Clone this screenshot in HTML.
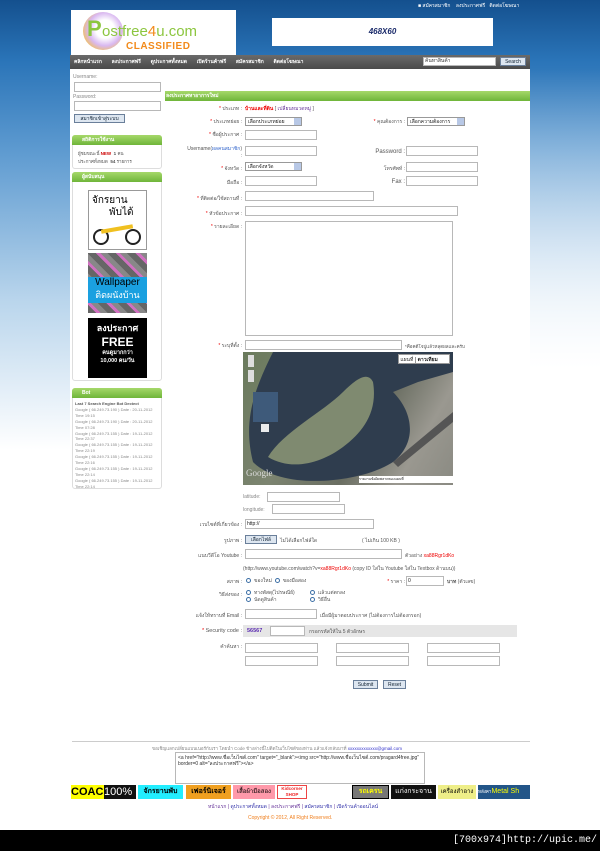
<!DOCTYPE html>
<html><head><meta charset="utf-8">
<style>
*{margin:0;padding:0;box-sizing:border-box}
body{width:600px;height:851px;position:relative;overflow:hidden;font-family:"Liberation Sans","Noto Sans CJK SC",sans-serif;font-size:5px;color:#555;
background:linear-gradient(180deg,#14508e 0px,#2a74b8 60px,#5d9ad0 150px,#b9d5ec 300px,#fff 450px);}
.a{position:absolute;white-space:nowrap}
.in{position:absolute;border:1px solid #b8b8b8;background:#fff}
.lb{position:absolute;text-align:right;white-space:nowrap;font-size:5px;color:#555}
.r{color:#e00}
.gh{position:absolute;background:linear-gradient(#a6d86a,#6fb53a);color:#fff;font-weight:bold;font-size:5px;padding-left:10px;line-height:10px;border-radius:3px 3px 0 0}
.box{position:absolute;border:1px solid #ddd;background:#fff;border-radius:3px}
.btn{position:absolute;background:#dde6f0;border:1px solid #6a7f9a;font-size:5px;text-align:center;line-height:8px;color:#123}
.sel{position:absolute;border:1px solid #999;background:#fff;font-size:5px;line-height:8px;padding-left:2px;color:#222}
.sel:after{content:"";position:absolute;right:0;top:0;width:7px;height:7px;background:#b8c8e6}
.rad{display:inline-block;width:5px;height:5px;border:1px solid #3a6ea5;border-radius:50%;vertical-align:middle;margin-right:3px}
</style></head><body>
<div class="a" style="left:418px;top:2px;color:#fff;font-size:5px">■ สมัครสมาชิก &nbsp;&nbsp; ลงประกาศฟรี &nbsp; ติดต่อโฆษณา</div>
<div class="a" style="left:71px;top:10px;width:165px;height:45px;background:#fff">
 <div class="a" style="left:12px;top:2px;width:40px;height:38px;border-radius:50%;background:radial-gradient(circle at 55% 45%,#fff 30%,#d9b8f0 55%,#f3c04a 80%)"></div>
 <div class="a" style="left:16px;top:6px;font-size:22px;color:#8cc63f;font-weight:bold">P</div>
 <div class="a" style="left:31px;top:13px;font-size:15px;color:#8cc63f">ostfree<span style="color:#f28a1a">4</span><span style="color:#8cc63f">u.com</span></div>
 <div class="a" style="left:55px;top:31px;font-size:10px;color:#f28a1a;font-weight:bold;letter-spacing:0.5px">CLASSIFIED</div>
</div>
<div class="a" style="left:272px;top:18px;width:221px;height:28px;background:#fff;text-align:center;line-height:28px;font-size:8px;font-style:italic;font-weight:bold;color:#1a2a6a">468X60</div>
<div class="a" style="left:70px;top:55px;width:460px;height:14px;background:linear-gradient(#6a6a6a,#4a4a4a);color:#fff;font-weight:bold;font-size:5px;line-height:14px;padding-left:4px">
 คลิกหน้าแรก &nbsp;&nbsp;&nbsp;&nbsp;&nbsp; ลงประกาศฟรี &nbsp;&nbsp;&nbsp;&nbsp;&nbsp; ดูประกาศทั้งหมด &nbsp;&nbsp;&nbsp;&nbsp;&nbsp; เปิดร้านค้าฟรี &nbsp;&nbsp;&nbsp;&nbsp;&nbsp; สมัครสมาชิก &nbsp;&nbsp;&nbsp;&nbsp;&nbsp; ติดต่อโฆษณา</div>
<div class="in" style="left:423px;top:57px;width:73px;height:9px;font-size:5px;line-height:7px;padding-left:1px;color:#333">ค้นหาสินค้า</div>
<div class="btn" style="left:500px;top:57px;width:26px;height:9px">Search</div>
<div class="a" style="left:70px;top:69px;width:460px;height:760px;background:#fff"></div>
<div class="a" style="left:530px;top:69px;width:70px;height:760px;background:linear-gradient(180deg,rgba(255,255,255,0),#fff 300px)"></div>
<div class="a" style="left:73px;top:74px;color:#888">Username:</div>
<div class="in" style="left:74px;top:82px;width:87px;height:10px"></div>
<div class="a" style="left:73px;top:94px;color:#888">Password:</div>
<div class="in" style="left:74px;top:101px;width:87px;height:10px"></div>
<div class="btn" style="left:74px;top:114px;width:51px;height:9px">สมาชิกเข้าสู่ระบบ</div>

<div class="box" style="left:72px;top:135px;width:90px;height:34px"></div>
<div class="gh" style="left:72px;top:135px;width:90px">สถิติการใช้งาน</div>
<div class="a" style="left:78px;top:150px;font-size:4.5px">ผู้ชมขณะนี้ <b style="color:#c00">NEW</b> &nbsp;<b>1</b> คน</div>
<div class="a" style="left:78px;top:158px;font-size:4.5px">ประกาศทั้งหมด &nbsp;<b>54</b> รายการ</div>

<div class="box" style="left:72px;top:172px;width:90px;height:209px"></div>
<div class="gh" style="left:72px;top:172px;width:90px">ผู้สนับสนุน</div>
<div class="a" style="left:88px;top:190px;width:59px;height:60px;background:#fff;border:1px solid #999">
 <div class="a" style="left:3px;top:2px;font-size:10px;color:#000">จักรยาน</div>
 <div class="a" style="left:20px;top:14px;font-size:10px;color:#000">พับได้</div>
 <div class="a" style="left:4px;top:38px;width:16px;height:16px;border:2px solid #222;border-radius:50%"></div>
 <div class="a" style="left:36px;top:38px;width:16px;height:16px;border:2px solid #222;border-radius:50%"></div>
 <div class="a" style="left:12px;top:36px;width:32px;height:4px;background:#f0c020;transform:rotate(-10deg)"></div>
</div>
<div class="a" style="left:88px;top:253px;width:59px;height:60px;background:repeating-linear-gradient(45deg,#666 0 6px,#d070c0 6px 9px,#888 9px 14px)">
 <div class="a" style="left:0;top:24px;width:59px;height:26px;background:#1aa0e0;color:#000;font-size:10px;text-align:center;line-height:12px">Wallpaper<br><span style="color:#fff;font-size:9px">ติดผนังบ้าน</span></div>
</div>
<div class="a" style="left:88px;top:318px;width:59px;height:60px;background:#000;color:#fff;text-align:center;font-weight:bold">
 <div style="font-size:9px;margin-top:3px">ลงประกาศ</div><div style="font-size:12px">FREE</div><div style="font-size:5.5px">คนดูมากกว่า<br>10,000 คน/วัน</div>
</div>

<div class="box" style="left:72px;top:388px;width:90px;height:101px"></div>
<div class="gh" style="left:72px;top:388px;width:90px">Bot</div>
<div class="a" style="left:75px;top:401px;font-size:4px;line-height:5.9px;color:#888;white-space:normal;width:86px">
<b style="color:#555">Last 7 Search Engine Bot Dectect</b><br>Google ( 66.249.73.190 ) Date : 20-11-2012 Time 19:15<br>Google ( 66.249.73.190 ) Date : 20-11-2012 Time 07:28<br>Google ( 66.249.73.155 ) Date : 19-11-2012 Time 22:37<br>Google ( 66.249.73.155 ) Date : 19-11-2012 Time 22:19<br>Google ( 66.249.73.155 ) Date : 19-11-2012 Time 22:16<br>Google ( 66.249.73.155 ) Date : 19-11-2012 Time 22:14<br>Google ( 66.249.73.155 ) Date : 19-11-2012 Time 22:14</div>

<div class="gh" style="left:165px;top:91px;width:365px;padding-left:1px;border-radius:0">ลงประกาศหาอาการใหม่</div>
<div class="lb" style="right:358px;top:105px"><span class="r">*</span> ประเภท :</div>
<div class="a" style="left:245px;top:105px"><b class="r">บ้านและที่ดิน</b> [ <span style="color:#639">เปลี่ยนหมวดหมู่</span> ]</div>
<div class="lb" style="right:358px;top:118px"><span class="r">*</span> ประเภทย่อย :</div>
<div class="sel" style="left:245px;top:117px;width:57px;height:9px">เลือกประเภทย่อย</div>
<div class="lb" style="right:195px;top:118px"><span class="r">*</span> คุณต้องการ :</div>
<div class="sel" style="left:407px;top:117px;width:58px;height:9px">เลือกความต้องการ</div>
<div class="lb" style="right:358px;top:131px"><span class="r">*</span> ชื่อผู้ประกาศ :</div>
<div class="in" style="left:245px;top:130px;width:72px;height:10px"></div>
<div class="lb" style="right:358px;top:145px">Username(<span style="color:#36c">ผลคนสมาชิก</span>)<br>:</div>
<div class="in" style="left:245px;top:146px;width:72px;height:10px"></div>
<div class="lb" style="right:195px;top:149px;font-size:6px">Password :</div>
<div class="in" style="left:406px;top:146px;width:72px;height:10px"></div>
<div class="lb" style="right:358px;top:165px"><span class="r">*</span> จังหวัด :</div>
<div class="sel" style="left:245px;top:162px;width:57px;height:9px">เลือกจังหวัด</div>
<div class="lb" style="right:195px;top:165px">โทรศัพท์ :</div>
<div class="in" style="left:406px;top:162px;width:72px;height:10px"></div>
<div class="lb" style="right:358px;top:179px">มือถือ :</div>
<div class="in" style="left:245px;top:176px;width:72px;height:10px"></div>
<div class="lb" style="right:195px;top:179px;font-size:6px">Fax :</div>
<div class="in" style="left:406px;top:176px;width:72px;height:10px"></div>
<div class="lb" style="right:358px;top:195px"><span class="r">*</span> ที่ติดต่อ/ใช้สถานที่ :</div>
<div class="in" style="left:245px;top:191px;width:129px;height:10px"></div>
<div class="lb" style="right:358px;top:210px"><span class="r">*</span> หัวข้อประกาศ :</div>
<div class="in" style="left:245px;top:206px;width:213px;height:10px"></div>
<div class="lb" style="right:358px;top:223px"><span class="r">*</span> รายละเอียด :</div>
<div class="in" style="left:245px;top:221px;width:208px;height:115px"></div>
<div class="lb" style="right:358px;top:342px"><span class="r">*</span> ระบุที่ตั้ง :</div>
<div class="in" style="left:245px;top:340px;width:157px;height:10px"></div>
<div class="a" style="left:405px;top:343px;font-size:4.5px">*คือคดีโจปูแล้วหลุดผลและครับ</div>
<div class="a" style="left:243px;top:352px;width:210px;height:133px;background:linear-gradient(120deg,#6a7a5c 0%,#7c8470 35%,#6a6e62 60%,#9a9890 80%,#8a8a82 100%);overflow:hidden">
 <svg width="210" height="133" style="position:absolute;left:0;top:0">
  <path d="M30 0 C10 40 0 70 10 110 C40 140 120 130 150 110 C175 90 170 60 150 40 L175 30 L210 20 L210 0 Z" fill="#2f3d4e"/>
  <path d="M25 105 C40 80 80 60 100 40 C115 25 125 20 130 30 C135 60 120 80 100 95 C80 110 50 120 25 105 Z" fill="#7f8a70"/>
  <rect x="10" y="40" width="25" height="30" fill="#3e5a7a"/>
  <path d="M150 110 L210 60 L210 70 L155 115 Z" fill="#555"/>
  <rect x="18" y="72" width="8" height="8" fill="#fff" opacity=".9" transform="translate(0,0)"/>
 </svg>
 <div class="a" style="left:155px;top:2px;width:52px;height:10px;background:#fff;font-size:5px;line-height:10px;color:#222;border:1px solid #999">&nbsp;แผนที่ <b style="border-left:1px solid #999;padding-left:2px">ดาวเทียม</b></div>
 <div class="a" style="left:5px;top:3px;width:6px;height:12px;background:#ddd"></div>
 <div class="a" style="left:5px;top:18px;width:6px;height:12px;background:#ddd"></div>
 <div class="a" style="left:3px;top:116px;color:#ddd;font-size:9px;font-family:'Liberation Serif',serif">Google</div>
 <div class="a" style="left:116px;top:124px;width:94px;height:7px;background:#fff;font-size:3.5px;line-height:7px;color:#222">รายงานข้อผิดพลาดของแผนที่</div>
</div>
<div class="a" style="left:243px;top:494px;color:#888">latitude:</div>
<div class="in" style="left:267px;top:492px;width:73px;height:10px"></div>
<div class="a" style="left:243px;top:507px;color:#888">longitude:</div>
<div class="in" style="left:272px;top:504px;width:73px;height:10px"></div>
<div class="lb" style="right:358px;top:521px">เวบไซต์ที่เกี่ยวข้อง :</div>
<div class="in" style="left:245px;top:519px;width:129px;height:10px;color:#222;font-size:5px;line-height:8px;padding-left:1px">http://</div>
<div class="lb" style="right:358px;top:537px">รูปภาพ :</div>
<div class="btn" style="left:245px;top:535px;width:32px;height:9px">เลือกไฟล์</div>
<div class="a" style="left:280px;top:537px">ไม่ได้เลือกไฟล์ใด</div>
<div class="a" style="left:362px;top:537px">( ไม่เกิน 100 KB )</div>
<div class="lb" style="right:358px;top:552px">แนบวีดีโอ Youtube :</div>
<div class="in" style="left:245px;top:549px;width:157px;height:10px"></div>
<div class="a" style="left:405px;top:552px">ตัวอย่าง <span class="r">xa88Rgr1dKo</span></div>
<div class="a" style="left:243px;top:565px">(http://www.youtube.com/watch?v=<span class="r">xa88Rgr1dKo</span> (copy ID ใส่ใน Youtube ใส่ใน Textbox ด้านบน))</div>
<div class="lb" style="right:358px;top:578px">สภาพ :</div>
<div class="a" style="left:246px;top:577px"><span class="rad"></span>ของใหม่ &nbsp;<span class="rad"></span>ของมือสอง</div>
<div class="lb" style="right:195px;top:578px"><span class="r">*</span> ราคา :</div>
<div class="in" style="left:406px;top:576px;width:38px;height:10px;font-size:5px;line-height:8px;padding-left:1px;color:#222">0</div>
<div class="a" style="left:447px;top:578px"><b>บาท</b> (ตัวเลข)</div>
<div class="lb" style="right:358px;top:591px">วิธีส่งของ :</div>
<div class="a" style="left:246px;top:590px;line-height:7px"><span class="rad"></span>ทางพัสดุ(ไปรษณีย์)<br><span class="rad"></span>นัดดูสินค้า</div>
<div class="a" style="left:310px;top:590px;line-height:7px"><span class="rad"></span>แล้วแต่ตกลง<br><span class="rad"></span>วิธีอื่น</div>
<div class="lb" style="right:358px;top:612px">แจ้งให้ทราบที่ Email :</div>
<div class="in" style="left:245px;top:609px;width:72px;height:10px"></div>
<div class="a" style="left:320px;top:612px">เมื่อมีผู้มาตอบประกาศ (ไม่ต้องการไม่ต้องกรอก)</div>
<div class="a" style="left:243px;top:625px;width:274px;height:12px;background:#e6e6e6"></div>
<div class="lb" style="right:358px;top:628px;font-size:5.5px"><span class="r">*</span> Security code :</div>
<div class="a" style="left:247px;top:628px;color:#5a2ab0;font-weight:bold;font-size:5.5px">56567</div>
<div class="in" style="left:270px;top:626px;width:35px;height:10px"></div>
<div class="a" style="left:309px;top:628px">กรอกรหัสให้ใน 5 ตัวอักษร</div>
<div class="lb" style="right:358px;top:643px">คำค้นหา :</div>
<div class="in" style="left:245px;top:643px;width:73px;height:10px"></div>
<div class="in" style="left:336px;top:643px;width:73px;height:10px"></div>
<div class="in" style="left:427px;top:643px;width:73px;height:10px"></div>
<div class="in" style="left:245px;top:656px;width:73px;height:10px"></div>
<div class="in" style="left:336px;top:656px;width:73px;height:10px"></div>
<div class="in" style="left:427px;top:656px;width:73px;height:10px"></div>
<div class="btn" style="left:353px;top:680px;width:25px;height:9px">Submit</div>
<div class="btn" style="left:383px;top:680px;width:23px;height:9px">Reset</div>
<div class="a" style="left:72px;top:741px;width:458px;height:1px;background:#ccc"></div>
<div class="a" style="left:152px;top:745px;font-size:4.5px;color:#888">ขอเชิญแลกเปลี่ยนแบนเนอร์กับเรา โดยนำ Code ข้างล่างนี้ไปติดในเว็บไซต์ของท่าน แล้วแจ้งกลับมาที่ <span style="color:#33c">xxxxxxxxxxxxx@gmail.com</span></div>
<div class="in" style="left:175px;top:752px;width:250px;height:32px;font-size:5px;color:#333;padding:2px;white-space:normal;line-height:6px">&lt;a href="http://www.ชื่อเว็บไซต์.com" target="_blank"&gt;&lt;img src="http://www.ชื่อเว็บไซต์.com/pragard4free.jpg" border=0 alt="ลงประกาศฟรี"&gt;&lt;/a&gt;</div>
<div class="a" style="left:71px;top:785px;width:33px;height:14px;background:#ff0;color:#000;font-weight:bold;font-size:11px;line-height:14px;overflow:hidden">COACH</div>
<div class="a" style="left:104px;top:785px;width:32px;height:14px;background:#111;color:#fff;font-size:11px;line-height:14px">100%</div>
<div class="a" style="left:138px;top:785px;width:45px;height:14px;background:#2ef;color:#000;font-weight:bold;font-size:7px;line-height:14px;text-align:center">จักรยานพับ</div>
<div class="a" style="left:186px;top:785px;width:45px;height:14px;background:#f0a020;color:#000;font-weight:bold;font-size:7px;line-height:14px;text-align:center">เฟอร์นิเจอร์</div>
<div class="a" style="left:233px;top:785px;width:42px;height:14px;background:#f9a;color:#000;font-size:6px;line-height:14px;text-align:center">เสื้อผ้ามือสอง</div>
<div class="a" style="left:277px;top:785px;width:30px;height:14px;background:#fff;border:1px solid #e44;color:#e22;font-size:4.5px;line-height:6px;text-align:center;font-weight:bold">Kidcorner<br>SHOP</div>
<div class="a" style="left:352px;top:785px;width:37px;height:14px;background:#777;border:1px solid #000;color:#ff0;font-weight:bold;font-size:7px;line-height:12px;text-align:center">รถเครน</div>
<div class="a" style="left:391px;top:785px;width:45px;height:14px;background:#111;color:#fff;font-size:7px;line-height:14px;text-align:center">แก่งกระจาน</div>
<div class="a" style="left:438px;top:785px;width:38px;height:14px;background:#ee8;color:#000;font-size:6px;line-height:14px;text-align:center">เครื่องสำอาง</div>
<div class="a" style="left:478px;top:785px;width:52px;height:14px;background:#258;color:#ff0;font-size:7px;line-height:14px;overflow:hidden"><span style="color:#fff;font-size:4.5px">หลังคา</span>Metal Sh</div>
<div class="a" style="left:208px;top:803px;font-size:5px;color:#639">หน้าแรก | <span style="color:#33a">ดูประกาศทั้งหมด</span> | ลงประกาศฟรี | <span style="color:#33a">สมัครสมาชิก</span> | <span style="color:#33a">เปิดร้านค้าออนไลน์</span></div>
<div class="a" style="left:248px;top:815px;font-size:5px;color:#f08020">Copyright © 2012, All Right Reserved.</div>
<div class="a" style="left:0;top:830px;width:600px;height:21px;background:#000;color:#fff;font-family:'Liberation Mono',monospace;font-size:10px;line-height:21px;text-align:right;padding-right:3px">[700x974]http://upic.me/</div>
</body></html>
